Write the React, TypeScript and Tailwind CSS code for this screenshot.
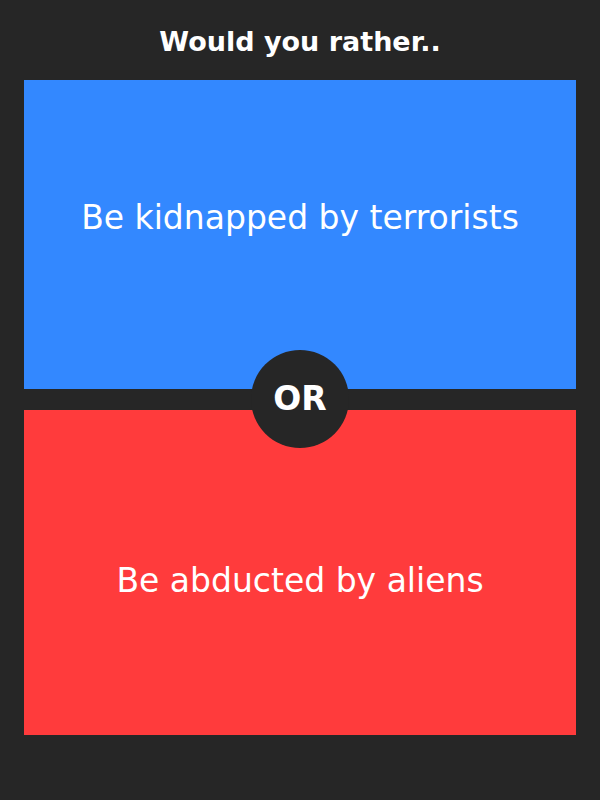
import React from "react";

export default function App() {
  return (
    <div className="w-[600px] h-[800px] bg-[#262626] flex flex-col px-6 relative" style={{ fontFamily: '"DejaVu Sans", sans-serif' }}>
      <div className="h-[80px] flex items-center justify-center text-white font-bold text-[27px] pt-[4px]">
        Would you rather..
      </div>
      <div className="relative">
        <div className="h-[309px] bg-[#3388ff] flex items-center justify-center text-white text-[33px] pb-[34px]">
          Be kidnapped by terrorists
        </div>
        <div className="h-[325px] mt-[21px] bg-[#ff3b3c] flex items-center justify-center text-white text-[33px] pt-[16px]">
          Be abducted by aliens
        </div>
        <div className="absolute left-1/2 top-[270px] -translate-x-1/2 w-[98px] h-[98px] rounded-full bg-[#262626] flex items-center justify-center text-white font-bold text-[33px]">
          OR
        </div>
      </div>
    </div>
  );
}
